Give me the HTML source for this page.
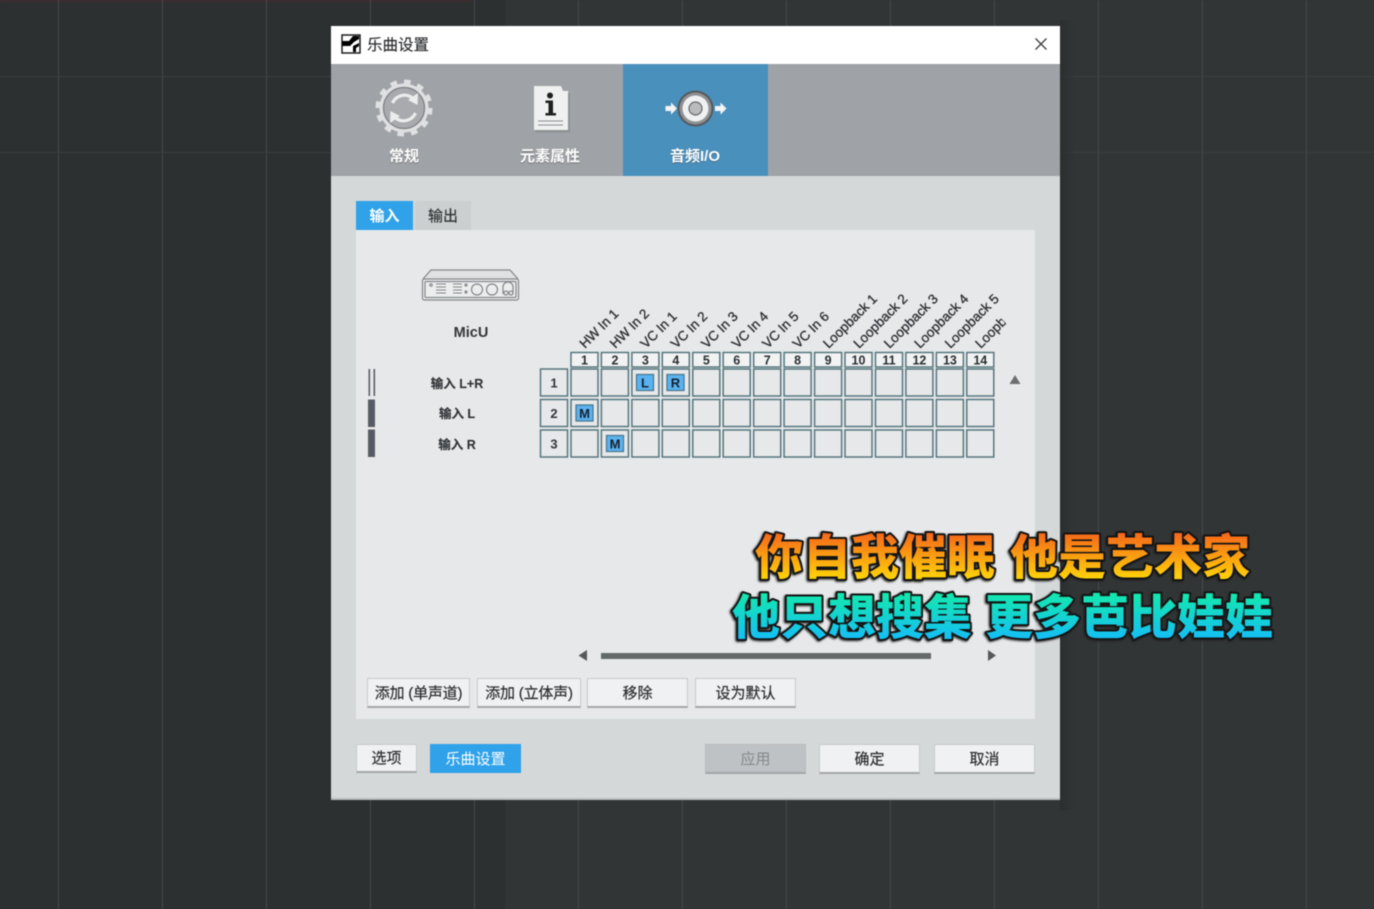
<!DOCTYPE html>
<html lang="zh">
<head>
<meta charset="utf-8">
<title>乐曲设置</title>
<style>
html,body{margin:0;padding:0;width:1374px;height:909px;overflow:hidden;background:#2f3233}
#root{position:absolute;left:0;top:0;width:1374px;height:909px;filter:blur(.5px);font-family:"Liberation Sans","Noto Sans CJK SC",sans-serif}
.a{position:absolute;box-sizing:border-box}
.btn{position:absolute;box-sizing:border-box;height:30px;background:#f0f1f2;border:1px solid #c6c9ca;border-bottom:2px solid #a4a7a8;color:#2b2d2f;font-size:15px;line-height:29px;text-align:center;white-space:nowrap;-webkit-text-stroke:.2px #2b2d2f}
.tabl{position:absolute;top:147px;width:146px;text-align:center;color:#fff;font-size:15px;font-weight:bold;line-height:20px;text-shadow:0 1px 1px rgba(60,60,60,.45)}
.rl{position:absolute;width:120px;text-align:center;left:397px;font-size:12.5px;font-weight:bold;color:#303336;line-height:18px;-webkit-text-stroke:.15px #303336}
</style>
</head>
<body>
<div id="root">
<svg class="a" style="left:0;top:0" width="1374" height="909" viewBox="0 0 1374 909">
  <defs>
    <linearGradient id="sh" x1="0" y1="0" x2="1" y2="0"><stop offset="0" stop-color="#26282a"/><stop offset="1" stop-color="#323536"/></linearGradient>
  </defs>
  <rect width="1374" height="909" fill="#2d3031"/>
  <rect x="505" width="869" height="909" fill="#323536"/>
  <rect width="470" height="2" fill="#3f2c30"/>
  <g stroke="#46494b" stroke-width="1">
    <path d="M58.5 0V909M162.5 0V909M266.5 0V909M370.5 0V909M474.5 0V909M578.5 0V909M682.5 0V909M786.5 0V909M890.5 0V909M994.5 0V909M1098.5 0V909M1202.5 0V909M1306.5 0V909"/>
  </g>
  <path d="M0 76.5H1374M0 152.5H1374" stroke="#3b3e40" stroke-width="1"/>
  <rect x="1060" y="20" width="14" height="790" fill="url(#sh)" opacity=".55"/>
</svg>

<!-- dialog -->
<div class="a" style="left:331px;top:26px;width:729px;height:774px;background:#d5d8d9;border-bottom:2px solid #b9bcbd"></div>
<div class="a" style="left:331px;top:26px;width:729px;height:38px;background:#fff"></div>
<div class="a" style="left:331px;top:64px;width:729px;height:112px;background:#9fa2a6"></div>
<div class="a" style="left:623px;top:64px;width:145px;height:112px;background:#4a90bd"></div>

<!-- title -->
<svg class="a" style="left:341px;top:34px" width="20" height="20" viewBox="0 0 20 20">
  <rect x="1" y="1" width="18" height="18" fill="#fff" stroke="#111" stroke-width="1.4"/>
  <path d="M1.5 7 L8 7 L12 2 L18 2 L18 5 L13 8 L9 12 L1.5 12Z" fill="#000"/>
  <path d="M12 12 L18 9 L18 12 L15 14 L15 18 L12 18Z" fill="#000"/>
</svg>
<div class="a" style="left:367px;top:35px;font-size:15.5px;line-height:21px;color:#2b2d2f;white-space:nowrap;-webkit-text-stroke:.15px #2b2d2f">乐曲设置</div>
<svg class="a" style="left:1034px;top:37px" width="14" height="14" viewBox="0 0 14 14"><path d="M1.5 1.5L12.5 12.5M12.5 1.5L1.5 12.5" stroke="#444" stroke-width="1.4" fill="none"/></svg>

<!-- tab icons -->
<svg class="a" style="left:331px;top:64px" width="440" height="112" viewBox="331 64 440 112">
  <!-- gear -->
  <g>
    <circle cx="404" cy="108" r="26" fill="none" stroke="#dfe0e1" stroke-width="5" stroke-dasharray="6.5 7.1"/>
    <circle cx="404" cy="108" r="24.5" fill="#dfe0e1"/>
    <circle cx="404" cy="108" r="20.5" fill="#a8aaad" stroke="#85888c" stroke-width="1.5"/>
    <path d="M392.5 103 A13 13 0 0 1 413 98.5" fill="none" stroke="#eceded" stroke-width="3.2"/>
    <path d="M418 93 L417.5 105 L408 100Z" fill="#eceded"/>
    <path d="M415.5 113 A13 13 0 0 1 395 117.5" fill="none" stroke="#eceded" stroke-width="3.2"/>
    <path d="M390 123 L390.5 111 L400 116Z" fill="#eceded"/>
  </g>
  <!-- document -->
  <g>
    <path d="M534 87 H561 L563 92 H569 V131 H534Z" fill="#7f8286" opacity=".5" transform="translate(1 1.5)"/>
    <path d="M534 86 H561 L563 91 H568 V130 H534Z" fill="#eff0f0"/>
    <circle cx="550" cy="95.5" r="3" fill="#1f1f1f"/>
    <path d="M545.5 100.5 H553 V113 H556 V115.5 H545.5 V113 H548.5 V103 H545.5Z" fill="#1f1f1f"/>
    <path d="M538 121H563M538 125H563" stroke="#8a8c8f" stroke-width="1"/>
  </g>
  <!-- knob -->
  <g>
    <circle cx="695.5" cy="108.5" r="18" fill="#55585c"/>
    <circle cx="695.5" cy="108.5" r="16" fill="#8f9193"/>
    <circle cx="695.5" cy="108.5" r="13" fill="#f0f1f1"/>
    <circle cx="695.5" cy="108.5" r="6.5" fill="#b9bbbc" stroke="#66696c" stroke-width="1.2"/>
    <path d="M665.5 106 H671 V102.5 L677 108.5 L671 114.5 V111 H665.5Z" fill="#f3f4f4"/>
    <path d="M715 106 H720.5 V102.5 L726.5 108.5 L720.5 114.5 V111 H715Z" fill="#f3f4f4"/>
  </g>
</svg>
<div class="tabl" style="left:331px">常规</div>
<div class="tabl" style="left:477px">元素属性</div>
<div class="tabl" style="left:622px">音频I/O</div>

<!-- sub tabs -->
<div class="a" style="left:356px;top:201px;width:57px;height:29px;background:#2fa2ea;color:#fff;font-size:15px;line-height:31px;text-align:center;font-weight:bold">输入</div>
<div class="a" style="left:415px;top:201px;width:56px;height:29px;background:#cbcfd0;color:#2f3234;font-size:15px;line-height:31px;text-align:center;-webkit-text-stroke:.2px #2f3234">输出</div>

<!-- panel -->
<div class="a" style="left:356px;top:230px;width:679px;height:489px;background:#e6e8e9"></div>

<!-- matrix -->
<svg class="a" style="left:331px;top:230px" width="729" height="489" viewBox="331 230 729 489">
  <defs>
    <g id="col" fill="none" stroke="#4f7079" stroke-width="1.4">
      <rect x="0" y="352.5" width="27" height="14.5" fill="#f1f3f3"/>
      <rect x="0" y="369" width="27" height="27"/>
      <rect x="0" y="399.5" width="27" height="27"/>
      <rect x="0" y="430" width="27" height="27"/>
    </g>
    <clipPath id="cl"><rect x="-10" y="-16" width="46" height="24"/></clipPath>
  </defs>
  <!-- device -->
  <g fill="none" stroke="#83878a" stroke-width="1.2">
    <path d="M423 279 L431 270 H510 L518 279" fill="#dfe1e2"/>
    <rect x="422.5" y="279" width="96" height="21" rx="2" fill="#eceeee"/>
    <rect x="425" y="281.5" width="91" height="16" rx="1"/>
    <circle cx="477" cy="289.5" r="5.5"/><circle cx="492" cy="289.5" r="5.5"/>
    <path d="M503 294 V287 A5 5 0 0 1 513 287 V294"/><circle cx="506" cy="293" r="2"/><circle cx="511" cy="293" r="2"/>
    <path d="M436 284H446M436 287H446M436 290H446M436 293H446M453 284H462M453 287H462M453 290H462M453 293H462" stroke-width="1.1"/>
    <circle cx="431" cy="285" r="1.2"/><circle cx="466" cy="285" r="1"/><circle cx="466" cy="292" r="1"/>
  </g>
  <text x="471" y="337" text-anchor="middle" font-size="14.5" font-weight="bold" fill="#33363a">MicU</text>

  <!-- bars -->
  <rect x="368.5" y="369" width="1.6" height="27" fill="#5a6068"/>
  <rect x="373.5" y="369" width="1.6" height="27" fill="#5a6068"/>
  <rect x="368" y="399.5" width="7" height="27.5" fill="#565c65"/>
  <rect x="368" y="429.5" width="7" height="27.5" fill="#565c65"/>

  <!-- row number cells -->
  <g fill="none" stroke="#4f7079" stroke-width="1.4">
    <rect x="540.5" y="369" width="27" height="27"/>
    <rect x="540.5" y="399.5" width="27" height="27"/>
    <rect x="540.5" y="430" width="27" height="27"/>
  </g>
  <g font-size="13" font-weight="bold" fill="#33363a" text-anchor="middle">
    <text x="554" y="387.5">1</text><text x="554" y="418">2</text><text x="554" y="448.5">3</text>
  </g>

  <use href="#col" x="571"/><use href="#col" x="601.4"/><use href="#col" x="631.9"/><use href="#col" x="662.3"/><use href="#col" x="692.8"/><use href="#col" x="723.2"/><use href="#col" x="753.7"/><use href="#col" x="784.1"/><use href="#col" x="814.6"/><use href="#col" x="845"/><use href="#col" x="875.5"/><use href="#col" x="905.9"/><use href="#col" x="936.4"/><use href="#col" x="966.8"/>

  <g font-size="12.5" font-weight="bold" fill="#2b2e32" text-anchor="middle">
    <text x="584.5" y="364.5">1</text><text x="615" y="364.5">2</text><text x="645.4" y="364.5">3</text><text x="675.8" y="364.5">4</text><text x="706.3" y="364.5">5</text><text x="736.7" y="364.5">6</text><text x="767.2" y="364.5">7</text><text x="797.6" y="364.5">8</text><text x="828.1" y="364.5">9</text><text x="858.5" y="364.5">10</text><text x="889" y="364.5">11</text><text x="919.4" y="364.5">12</text><text x="949.9" y="364.5">13</text><text x="980.3" y="364.5">14</text>
  </g>

  <!-- active cells -->
  <g stroke="#4a7a8e" stroke-width="1.3" fill="#5ab2f2">
    <rect x="636.5" y="374.5" width="17" height="16"/>
    <rect x="667" y="374.5" width="17" height="16"/>
    <rect x="576" y="405" width="17" height="16"/>
    <rect x="606.5" y="435.5" width="17" height="16"/>
  </g>
  <g font-size="13" font-weight="bold" fill="#16222e" text-anchor="middle">
    <text x="645" y="387.5">L</text><text x="675.5" y="387.5">R</text><text x="584.5" y="418">M</text><text x="615" y="448.5">M</text>
  </g>

  <!-- rotated labels -->
  <g font-size="13.5" fill="#2b2e32" stroke="#2b2e32" stroke-width=".3">
    <text transform="translate(585 349) rotate(-45)">HW In 1</text>
    <text transform="translate(615.4 349) rotate(-45)">HW In 2</text>
    <text transform="translate(645.9 349) rotate(-45)">VC In 1</text>
    <text transform="translate(676.3 349) rotate(-45)">VC In 2</text>
    <text transform="translate(706.8 349) rotate(-45)">VC In 3</text>
    <text transform="translate(737.2 349) rotate(-45)">VC In 4</text>
    <text transform="translate(767.7 349) rotate(-45)">VC In 5</text>
    <text transform="translate(798.1 349) rotate(-45)">VC In 6</text>
    <text transform="translate(828.6 349) rotate(-45)">Loopback 1</text>
    <text transform="translate(859 349) rotate(-45)">Loopback 2</text>
    <text transform="translate(889.5 349) rotate(-45)">Loopback 3</text>
    <text transform="translate(919.9 349) rotate(-45)">Loopback 4</text>
    <text transform="translate(950.4 349) rotate(-45)">Loopback 5</text>
    <g transform="translate(980.8 349) rotate(-45)"><text clip-path="url(#cl)">Loopback 6</text></g>
  </g>

  <!-- scroll -->
  <path d="M1009.5 384 L1015 375 L1020.5 384Z" fill="#6b6f72"/>
  <path d="M587 650 V661 L578.5 655.5Z" fill="#55595c"/>
  <path d="M988 650 V661 L996 655.5Z" fill="#55595c"/>
  <rect x="601" y="653" width="330" height="6" fill="#646969"/>
</svg>

<div class="rl" style="top:375px">输入 L+R</div>
<div class="rl" style="top:405px">输入 L</div>
<div class="rl" style="top:436px">输入 R</div>

<!-- buttons -->
<div class="btn" style="left:367px;top:678px;width:103px;letter-spacing:-.2px">添加 (单声道)</div>
<div class="btn" style="left:477px;top:678px;width:104px;letter-spacing:-.2px">添加 (立体声)</div>
<div class="btn" style="left:587px;top:678px;width:101px">移除</div>
<div class="btn" style="left:695px;top:678px;width:101px">设为默认</div>

<div class="btn" style="left:356px;top:744px;width:61px;height:29px;line-height:28px">选项</div>
<div class="a" style="left:430px;top:744px;width:91px;height:29px;background:#2fa2ea;color:#fff;font-size:15px;line-height:31px;text-align:center">乐曲设置</div>
<div class="btn" style="left:705px;top:744px;width:101px;background:#bfc2c4;border-color:#b8bbbd;border-bottom-color:#a2a5a7;color:#85888b;-webkit-text-stroke:0">应用</div>
<div class="btn" style="left:819px;top:744px;width:101px">确定</div>
<div class="btn" style="left:934px;top:744px;width:101px">取消</div>

<!-- subtitles -->
<svg class="a" style="left:0;top:0" width="1374" height="909" viewBox="0 0 1374 909">
  <defs>
    <linearGradient id="g1" x1="0" y1="0" x2="0" y2="1"><stop offset=".1" stop-color="#f3541e"/><stop offset=".9" stop-color="#ffd908"/></linearGradient>
    <linearGradient id="g2" x1="0" y1="0" x2="0" y2="1"><stop offset=".1" stop-color="#14f0a0"/><stop offset=".9" stop-color="#14bdf8"/></linearGradient>
  </defs>
  <g font-family="'Noto Sans CJK SC','Liberation Sans',sans-serif" font-size="48" font-weight="900" stroke="#141414" stroke-width="4" paint-order="stroke" stroke-linejoin="round" style="filter:drop-shadow(-1px 1px 1px #222)">
    <g fill="url(#g1)">
      <text x="755" y="574">你自我催眠</text>
      <text x="1010" y="574">他是艺术家</text>
    </g>
    <g fill="url(#g2)">
      <text x="732" y="634">他只想搜集</text>
      <text x="985" y="634">更多芭比娃娃</text>
    </g>
  </g>
</svg>
</div>
</body>
</html>
